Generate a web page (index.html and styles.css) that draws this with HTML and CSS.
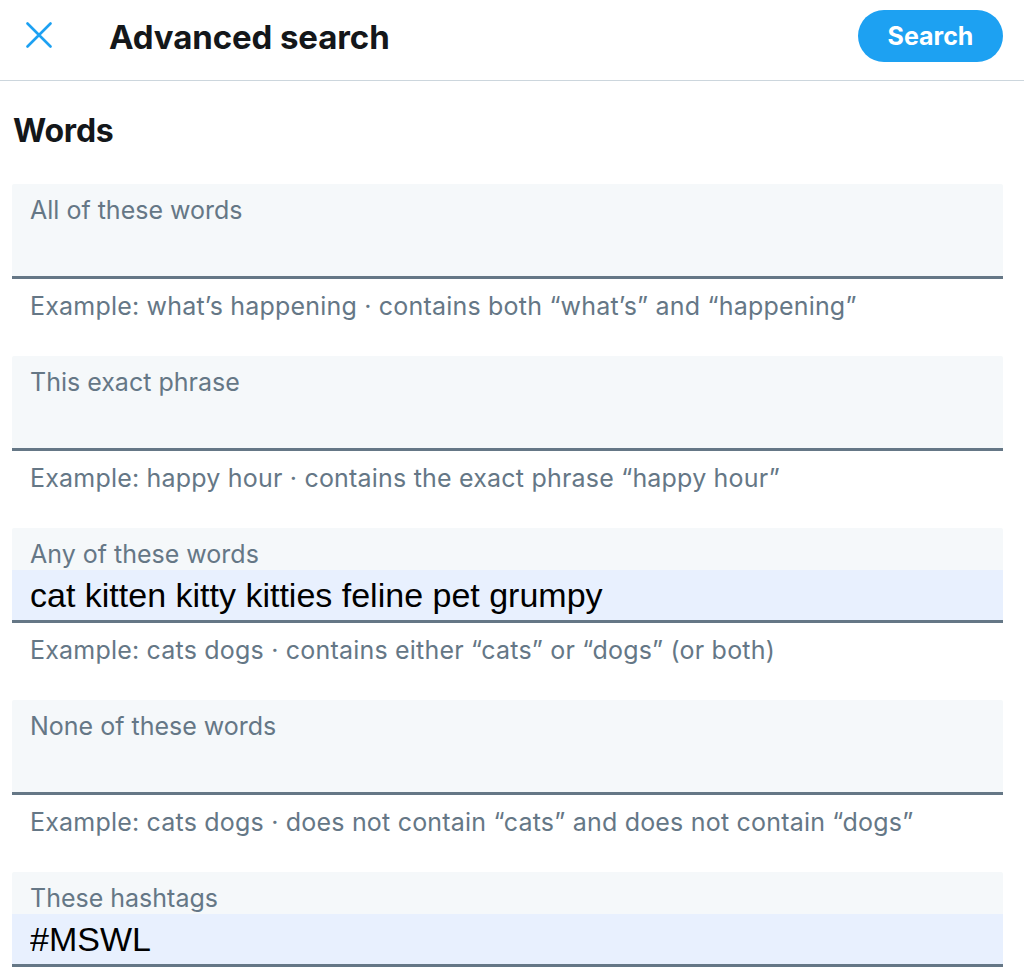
FILE: index.html
```html
<!DOCTYPE html>
<html lang="en">
<head>
<meta charset="utf-8">
<title>Advanced search</title>
<link rel="stylesheet" href="styles.css">
</head>
<body>
<header class="topbar">
  <button class="close" aria-label="Close">
    <svg viewBox="0 0 26 26" width="26" height="26"><path d="M1.5 1.5 L24.5 24.5 M24.5 1.5 L1.5 24.5" stroke="#1da1f2" stroke-width="2.6" stroke-linecap="round" fill="none"/></svg>
  </button>
  <h1 class="title">Advanced search</h1>
  <button class="search-btn">Search</button>
</header>
<main class="content">
  <h2 class="section">Words</h2>

  <div class="field">
    <label class="field-label">All of these words</label>
    <input class="field-input" type="text" value="">
  </div>
  <p class="hint">Example: what’s happening · contains both “what’s” and “happening”</p>

  <div class="field">
    <label class="field-label">This exact phrase</label>
    <input class="field-input" type="text" value="">
  </div>
  <p class="hint">Example: happy hour · contains the exact phrase “happy hour”</p>

  <div class="field">
    <label class="field-label">Any of these words</label>
    <input class="field-input filled" type="text" value="cat kitten kitty kitties feline pet grumpy">
  </div>
  <p class="hint">Example: cats dogs · contains either “cats” or “dogs” (or both)</p>

  <div class="field">
    <label class="field-label">None of these words</label>
    <input class="field-input" type="text" value="">
  </div>
  <p class="hint">Example: cats dogs · does not contain “cats” and does not contain “dogs”</p>

  <div class="field">
    <label class="field-label">These hashtags</label>
    <input class="field-input filled" type="text" value="#MSWL">
  </div>
</main>
</body>
</html>
```
FILE: styles.css
```css
* { box-sizing: border-box; }

html, body {
  margin: 0;
  padding: 0;
  background: #ffffff;
  font-family: Inter, "Noto Sans", "Liberation Sans", sans-serif;
  color: #14171a;
  overflow: hidden;
}

.topbar {
  height: 81px;
  display: flex;
  align-items: center;
  padding: 0 21px 0 26px;
  border-bottom: 1px solid #ccd6dd;
}

.close {
  width: 26px;
  height: 26px;
  padding: 0;
  border: 0;
  background: none;
  display: flex;
  margin-top: -10px;
}

.title {
  margin: -6px 0 0 57px;
  font-size: 33px;
  font-weight: 700;
  line-height: 38px;
  flex: 1;
  letter-spacing: -0.1px;
}

.search-btn {
  width: 145px;
  height: 52px;
  border: 0;
  border-radius: 26px;
  background: #1da1f2;
  color: #ffffff;
  font-family: Inter, "Noto Sans", sans-serif;
  font-size: 25px;
  font-weight: 700;
  margin-top: -8px;
  padding: 0;
}

.content {
  padding: 0 21px 0 12px;
}

.section {
  margin: 0;
  padding: 30px 0 33px 1px;
  font-size: 32px;
  line-height: 40px;
  font-weight: 700;
  letter-spacing: -0.2px;
}

.field {
  display: flex;
  flex-direction: column;
  background: #f5f8fa;
  border-bottom: 3px solid #657786;
  border-radius: 2px 2px 0 0;
  height: 95px;
}

.field-label {
  padding: 12px 18px 0;
  font-size: 25px;
  line-height: 29px;
  height: 42px;
  color: #657786;
}

.field-input {
  height: 50px;
  border: 0;
  margin: 0;
  padding: 0 18px;
  background: transparent;
  font-family: "Liberation Sans", Arial, sans-serif;
  font-size: 34px;
  color: #000000;
  outline: none;
  width: 100%;
}

.field-input.filled {
  background: #e8f0fe;
}

.hint {
  margin: 0;
  height: 77px;
  padding: 13px 18px 0;
  font-size: 25px;
  line-height: 29px;
  letter-spacing: 0.2px;
  color: #657786;
}
```
